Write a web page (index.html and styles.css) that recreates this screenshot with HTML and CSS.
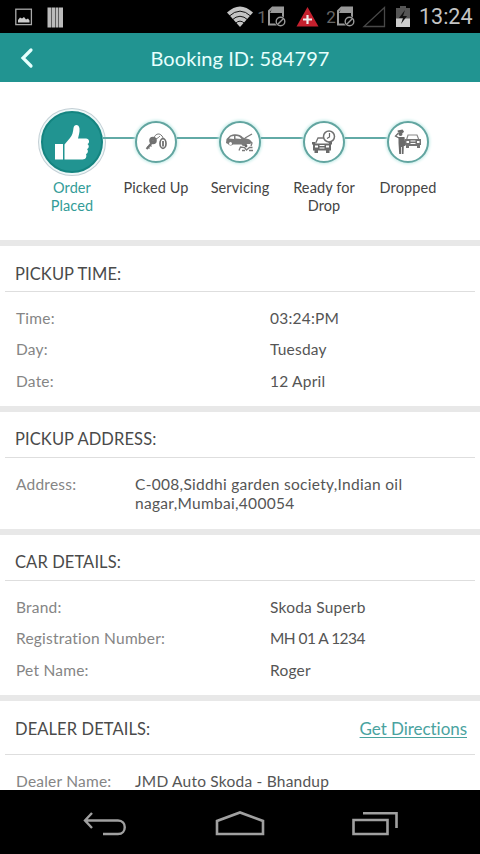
FILE: index.html
```html
<!DOCTYPE html>
<html lang="en">
<head>
  <meta charset="UTF-8" />
  <meta name="viewport" content="width=device-width, initial-scale=1.0"/>
  <title>Booking ID: 584797</title>
  <link rel="stylesheet" href="styles.css">
</head>
<body>
  <div class="screen">
    <!-- Android status bar -->
    <div class="status-bar">
      <svg class="status-left" width="52" height="22" viewBox="0 0 52 22">
        <rect x="0.8" y="3.2" width="15.6" height="15.4" fill="none" stroke="#aaa" stroke-width="1.3"/>
        <path d="M3 16.5v-2.5l2-2.5 2 1 2-1.500 2 2.500 2-1 1.500 2v2z" fill="#ccc"/>
        <path d="M32.500 1.500h4v20h-4zM37 1.500h3v20h-3zM40.500 1.500h3v20h-3zM44 1.500h4v20h-4z" fill="#bbb"/>
      </svg>
      <div class="status-right">
        <svg width="26" height="22" viewBox="0 0 26 22">
          <path d="M0 6.500Q13-5.500 26 6.500L13 21z" fill="#c4c4c4"/>
          <path d="M2 10.300Q13 0 24 10.300M5 14Q13 6.500 21 14M8.500 17.300Q13 13 17.500 17.300" fill="none" stroke="#000" stroke-width="0.900"/>
        </svg>
        <span class="sim-num">1</span>
        <svg width="19" height="22" viewBox="0 0 19 22">
          <path d="M4.500 1.500H15v17H1V5z" fill="none" stroke="#999" stroke-width="2"/>
          <path d="M4.500 1.500H15V7H2z" fill="#999"/>
          <circle cx="12.500" cy="15.500" r="5.500" fill="#000"/>
          <circle cx="12.500" cy="15.500" r="4.300" fill="none" stroke="#999" stroke-width="1.400"/>
          <path d="M9.500 18.500l6-6" stroke="#999" stroke-width="1.400"/>
        </svg>
        <svg class="alert" width="23" height="22" viewBox="0 0 23 22">
          <path d="M11.500 1L22.500 20.500H.500z" fill="#c5202e"/>
          <path d="M11.500 9v9M7 13.500h9" stroke="#eee" stroke-width="2.200"/>
        </svg>
        <span class="sim-num">2</span>
        <svg width="19" height="22" viewBox="0 0 19 22">
          <path d="M4.500 1.500H15v17H1V5z" fill="none" stroke="#999" stroke-width="2"/>
          <path d="M4.500 1.500H15V7H2z" fill="#999"/>
          <circle cx="12.500" cy="15.500" r="5.500" fill="#000"/>
          <circle cx="12.500" cy="15.500" r="4.300" fill="none" stroke="#999" stroke-width="1.400"/>
          <path d="M9.500 18.500l6-6" stroke="#999" stroke-width="1.400"/>
        </svg>
        <svg class="signal" width="24" height="22" viewBox="0 0 24 22">
          <path d="M22.500 1.500v19H2z" fill="none" stroke="#484848" stroke-width="1.300"/>
        </svg>
        <svg class="battery" width="14" height="22" viewBox="0 0 14 22">
          <path d="M4 0h6v2h4v11H0V2h4z" fill="#555"/>
          <path d="M0 12.500h14V21H0z" fill="#ccc"/>
          <path d="M9 4L3 12h4l-2 6 6-8H7z" fill="#111"/>
        </svg>
        <span class="clock">13:24</span>
      </div>
    </div>

    <div class="header">
      <svg class="back" width="14" height="22" viewBox="0 0 14 22">
        <path d="M11 3L3 11l8 8" fill="none" stroke="#e6fffd" stroke-width="3.200" stroke-linecap="round"/>
      </svg>
      <h1>Booking ID: 584797</h1>
    </div>

    <!-- Progress steps -->
    <div class="steps">
      <div class="step active">
        <div class="track">
          <div class="circle">
            <svg width="36" height="38" viewBox="0 0 36 38">
              <path d="M1 21h8v15.500H1z" fill="#fff"/>
              <path d="M10.500 21.500l5.500-6.500c2.500-3 3-6 3.500-10C20 1 25 1 25.500 5.500c.400 4-1 7.500-1.500 10h8c3.500 0 4 4.500 1.500 5.500 2 1.500 1.500 4.500-.500 5 1.500 1.500 1 4.500-1 5 1 2.500 0 5.500-3.500 5.500h-18z" fill="#fff"/>
            </svg>
          </div>
        </div>
        <span class="label">Order<br>Placed</span>
      </div>
      <div class="step">
        <div class="track">
          <div class="circle">
            <svg width="24" height="20" viewBox="0 0 24 20" fill="none" stroke="#707070">
              <path d="M8.500 10L2.500 17" stroke-width="2"/>
              <path d="M3.500 14.500l2 2M5.500 12.500l2 2" stroke-width="1.200"/>
              <circle cx="9" cy="8.500" r="2" stroke-width="3.600"/>
              <path d="M10 6c1-4 5-5 7-3 2 1.500 2 3 2 4M12 7c2-1 3-2 4-3" stroke-width="1"/>
              <ellipse cx="19" cy="11.500" rx="3" ry="4.800" stroke-width="1.700"/>
              <path d="M19 9v5.500" stroke-width="1.800"/>
            </svg>
          </div>
        </div>
        <span class="label">Picked Up</span>
      </div>
      <div class="step">
        <div class="track">
          <div class="circle">
            <svg width="30" height="20" viewBox="0 0 30 20">
              <path d="M1 11l.500-4L5 3.500C9 1.500 15 1.500 18 5.500l5 1.500c3 .500 3.500 3 2.500 5H22a3 3 0 0 1-5.500.500H8a3 3 0 0 1-5-.500z" fill="#7a7a7a"/>
              <path d="M4 6.500l2-2 3-.500v3zM10.500 4c3-.200 4.500.800 6 3l-6-.500z" fill="#fff"/>
              <circle cx="5.500" cy="11.500" r="1.500" fill="#fff"/>
              <path d="M20 6l7-4M25 9l2 2-1 3M14 18.500l1.500-3.500 4 .500 2 2.500 3-2.500h3M17 18.500h3M24 18.500h4" fill="none" stroke="#7a7a7a" stroke-width="1.300"/>
              <circle cx="21" cy="14" r="1.400" fill="#666"/>
            </svg>
          </div>
        </div>
        <span class="label">Servicing</span>
      </div>
      <div class="step">
        <div class="track">
          <div class="circle">
            <svg width="26" height="26" viewBox="0 0 26 26">
              <path d="M4.500 14.500L7 9h8l4 5.500" fill="none" stroke="#747474" stroke-width="1.300"/>
              <path d="M1 13h3v1.500h14V13h3v2l-1 1v5.500h-1.500V24H15v-2.500H7V24H3.500v-2.500H2V16l-1-1z" fill="#6a6a6a"/>
              <path d="M4 16.500h3v2H4zM15 16.500h3v2h-3zM8.500 16h5v1h-5zM8.500 18.500h5v1h-5z" fill="#fff"/>
              <circle cx="18" cy="7.500" r="5.500" fill="#fff" stroke="#707070" stroke-width="1.500"/>
              <path d="M18.500 4v4l-2.500 1.500" fill="none" stroke="#666" stroke-width="1.200"/>
            </svg>
          </div>
        </div>
        <span class="label">Ready for<br>Drop</span>
      </div>
      <div class="step">
        <div class="track">
          <div class="circle">
            <svg width="28" height="26" viewBox="0 0 28 26">
              <circle cx="6.500" cy="5" r="2" fill="#6a6a6a"/>
              <path d="M3.500 1.500l5-1 1.500 2-1 1.500-5-.500z" fill="#6a6a6a"/>
              <path d="M4.500 8h6l1 9h-1.700l-.300 8H7.800v-7H7v7H5.200L4.500 14z" fill="#6a6a6a"/>
              <path d="M5 9L1.500 7l3-3" fill="none" stroke="#6a6a6a" stroke-width="1.300"/>
              <path d="M12.500 11l1.500-5h9l2 5" fill="none" stroke="#888" stroke-width="1.200"/>
              <path d="M11 10h16v6h-1v3h-3v-2h-8v2h-3v-3h-1z" fill="#747474"/>
              <path d="M12.500 12h2.500v2h-2.500zM23 12h2.500v2H23zM16.500 11.500h5v1h-5zM16.500 14h5v1h-5z" fill="#fff"/>
            </svg>
          </div>
        </div>
        <span class="label">Dropped</span>
      </div>
    </div>

    <div class="section">
      <div class="section-title"><h2>PICKUP TIME:</h2></div>
      <div class="rows">
        <div class="row"><span class="key">Time:</span><span class="value">03:24:PM</span></div>
        <div class="row"><span class="key">Day:</span><span class="value">Tuesday</span></div>
        <div class="row"><span class="key">Date:</span><span class="value">12 April</span></div>
      </div>
    </div>

    <div class="section">
      <div class="section-title"><h2>PICKUP ADDRESS:</h2></div>
      <div class="rows address">
        <div class="row narrow"><span class="key">Address:</span><span class="value">C-008,Siddhi garden society,Indian oil<br>nagar,Mumbai,400054</span></div>
      </div>
    </div>

    <div class="section">
      <div class="section-title"><h2>CAR DETAILS:</h2></div>
      <div class="rows">
        <div class="row"><span class="key">Brand:</span><span class="value">Skoda Superb</span></div>
        <div class="row"><span class="key">Registration Number:</span><span class="value tight">MH 01 A 1234</span></div>
        <div class="row"><span class="key">Pet Name:</span><span class="value">Roger</span></div>
      </div>
    </div>

    <div class="section dealer">
      <div class="section-title">
        <h2>DEALER DETAILS:</h2>
        <a href="#">Get Directions</a>
      </div>
      <div class="rows">
        <div class="row narrow"><span class="key">Dealer Name:</span><span class="value">JMD Auto Skoda - Bhandup</span></div>
      </div>
    </div>

    <!-- Android navigation bar -->
    <div class="nav-bar">
      <svg width="46" height="28" viewBox="0 0 46 28">
        <path d="M10 2L3 9.500l7 7.500M3 9.500h33c9 0 9 13.500 0 13.500H21" fill="none" stroke="#a0a0a0" stroke-width="2.400"/>
      </svg>
      <svg width="50" height="28" viewBox="0 0 50 28">
        <path d="M2 23V10L25 1.500 48 10v13z" fill="none" stroke="#a0a0a0" stroke-width="2.600"/>
      </svg>
      <svg width="48" height="28" viewBox="0 0 48 28">
        <path d="M2.500 9h34v14h-34zM12 2.300h33.500V17" fill="none" stroke="#a0a0a0" stroke-width="2.600"/>
      </svg>
    </div>
  </div>
</body>
</html>
```

FILE: styles.css
```css
body {
  margin: 0;
  background-color: #fff;
  color: #4a4a4a;
  font-family: Lato, "Liberation Sans", sans-serif;
}

h1, h2 {
  margin: 0;
  font-weight: 400;
}

svg {
  display: block;
  flex-shrink: 0;
}

.screen {
  display: flex;
  flex-direction: column;
  width: 480px;
  height: 854px;
  overflow: hidden;
}

/* Status bar */
.status-bar {
  display: flex;
  justify-content: space-between;
  align-items: center;
  flex-shrink: 0;
  height: 33px;
  padding: 0 8px 0 15px;
  box-sizing: border-box;
  background-color: #000;
}

.status-right {
  display: flex;
  align-items: center;
}

.sim-num {
  width: 12px;
  padding-left: 3px;
  text-align: center;
  font-family: Roboto, sans-serif;
  font-size: 17px;
  color: #666;
}

.alert {
  margin: 0 3px 0 9px;
}

.signal {
  margin: 0 10px 0 6px;
}

.clock {
  width: 53px;
  margin-left: 9px;
  font-family: Roboto, sans-serif;
  font-size: 21.5px;
  color: #c4c4c4;
  white-space: nowrap;
}

/* Header */
.header {
  display: flex;
  align-items: center;
  flex-shrink: 0;
  height: 49px;
  padding: 0 20px;
  background-color: #219491;
}

.header h1 {
  flex: 1;
  margin-right: 14px;
  text-align: center;
  font-size: 20px;
  line-height: 24px;
  letter-spacing: 0.08px;
  color: #e6fffd;
}

/* Steps */
.steps {
  display: flex;
  flex-shrink: 0;
  height: 158px;
  padding: 26px 30px 0;
  box-sizing: border-box;
}

.step {
  width: 84px;
  text-align: center;
}

.track {
  display: flex;
  align-items: center;
  height: 68px;
}

.track::before,
.track::after {
  content: "";
  flex: 1;
  height: 2px;
  margin-bottom: 8px;
  background-color: #62aaa6;
}

.step:first-child .track::before,
.step:last-child .track::after {
  background: none;
}

.circle {
  display: flex;
  align-items: center;
  justify-content: center;
  width: 42px;
  height: 42px;
  box-sizing: border-box;
  border: 2px solid #62a5a0;
  border-radius: 50%;
  background-color: #fff;
  box-shadow: 0 0 3px 1px #c5ece8;
}

.active .circle {
  width: 62px;
  height: 62px;
  border-color: #148480;
  background-color: #219491;
  box-shadow: 0 0 0 2px #edf8f8, 0 0 0 3px #c3cfd5;
}

.label {
  display: block;
  margin-top: 3px;
  font-size: 14.5px;
  line-height: 18px;
  letter-spacing: 0.1px;
  white-space: nowrap;
  color: #444;
}

.active .label {
  color: #339c98;
}

/* Sections */
.section {
  flex-shrink: 0;
  border-top: 6px solid #e8e8e8;
}

.section-title {
  display: flex;
  justify-content: space-between;
  align-items: center;
  height: 46px;
  margin: 0 5px;
  padding: 10px 8px 0 10px;
  box-sizing: border-box;
  border-bottom: 1px solid #dedede;
}

.section-title h2 {
  font-size: 16.5px;
  letter-spacing: 0.1px;
  color: #4a4a4a;
}

.section-title a {
  font-size: 17px;
  letter-spacing: -0.05px;
  color: #4aa39f;
  text-underline-offset: 2px;
}

.rows {
  padding: 11px 16px 9px;
}

.row {
  display: flex;
  font-size: 15.5px;
  line-height: 31.33px;
  letter-spacing: 0.22px;
}

.key {
  width: 254px;
  color: #858585;
}

.value {
  color: #555;
  white-space: nowrap;
}

.tight {
  letter-spacing: -0.55px;
}

.narrow .key {
  width: 119px;
}

.address {
  padding: 17px 16px 15px;
}

.address .row {
  line-height: 19.5px;
}

.address .value {
  letter-spacing: 0.3px;
}

.dealer {
  flex: 1;
  min-height: 0;
  overflow: hidden;
}

.dealer .section-title {
  height: 54px;
  padding-top: 3px;
}

/* Navigation bar */
.nav-bar {
  display: flex;
  justify-content: space-between;
  align-items: center;
  flex-shrink: 0;
  height: 64px;
  padding: 6px 81px 0 82px;
  box-sizing: border-box;
  background-color: #000;
}
```
